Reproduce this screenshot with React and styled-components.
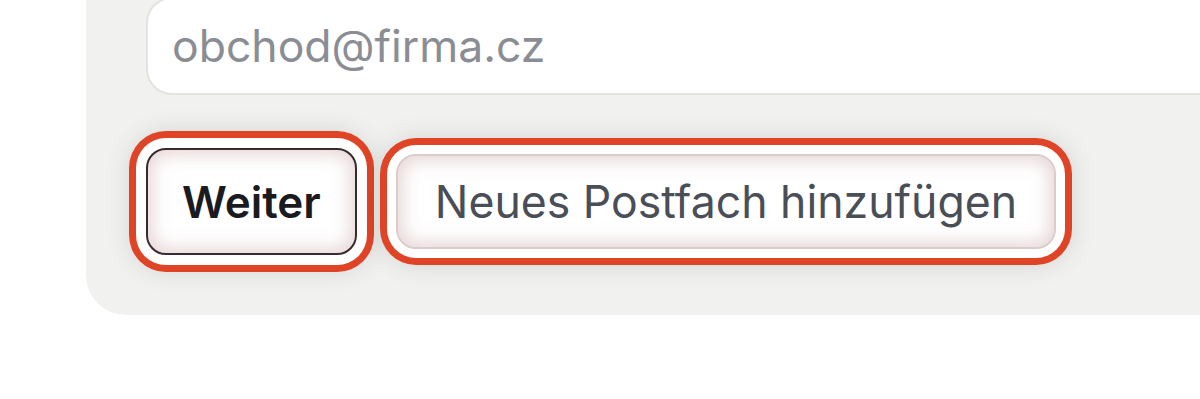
import React from "react";
import styled, { createGlobalStyle } from "styled-components";

const Global = createGlobalStyle`
  html, body { margin: 0; padding: 0; background: #ffffff; overflow: hidden; }
  body { font-family: Inter, "Noto Sans", sans-serif; }
`;

const Page = styled.div`
  width: 1200px;
  height: 399px;
  overflow: hidden;
  background: #ffffff;
`;

const Panel = styled.div`
  margin-left: 86px;
  margin-top: -43px;
  width: 1200px;
  background: #f1f1ef;
  border-radius: 40px;
  padding: 40px 0 60px 60px;
  display: flex;
  flex-direction: column;
  gap: 53px;
`;

const Input = styled.input`
  box-sizing: border-box;
  height: 98px;
  width: 1100px;
  border: 2px solid #e3e3e0;
  border-radius: 26px;
  background: #ffffff;
  padding: 0 24px;
  font-family: Inter, sans-serif;
  font-size: 44.5px;
  color: #222;
  outline: none;
  &::placeholder { color: #8a8e94; }
`;

const Row = styled.div`
  display: flex;
  align-items: center;
  gap: 39px;
`;

const Button = styled.button`
  box-sizing: border-box;
  height: ${p => (p.$primary ? "107px" : "95px")};
  padding: 0 ${p => (p.$primary ? "34px" : "37px")};
  border-radius: 20px;
  border: ${p => (p.$primary ? "2px solid #3a2a2d" : "2px solid #dccbcb")};
  background: #ffffff;
  font-family: Inter, sans-serif;
  font-size: ${p => (p.$primary ? "44px" : "44.6px")};
  font-weight: ${p => (p.$primary ? 600 : 400)};
  color: ${p => (p.$primary ? "#1b1b1f" : "#4a4e57")};
  box-shadow:
    inset 0 0 18px 4px rgba(205, 170, 170, 0.5),
    0 0 0 ${p => (p.$primary ? "10px" : "9px")} #ffffff,
    0 0 0 ${p => (p.$primary ? "17px" : "16px")} #df4426,
    0 0 24px 18px rgba(0, 0, 0, 0.10);
  cursor: pointer;
`;

export default function App() {
  return (
    <Page>
      <Global />
      <Panel>
        <Input placeholder="obchod@firma.cz" />
        <Row>
          <Button $primary>Weiter</Button>
          <Button>Neues Postfach hinzufügen</Button>
        </Row>
      </Panel>
    </Page>
  );
}
